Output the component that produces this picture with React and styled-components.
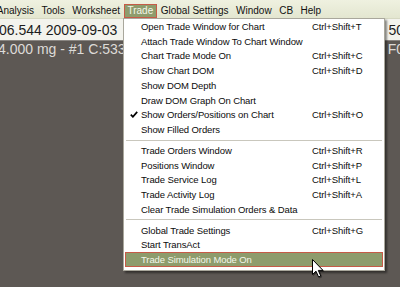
import React from 'react';
import styled, { createGlobalStyle } from 'styled-components';

const GlobalStyle = createGlobalStyle`
  html, body {
    margin: 0;
    padding: 0;
    background: #5d5854;
  }
  body {
    font-family: "Liberation Sans", Arial, sans-serif;
  }
`;

const Screen = styled.div`
  position: relative;
  width: 400px;
  height: 287px;
  overflow: hidden;
  background: #5d5854;
`;

const MenuBar = styled.div`
  display: flex;
  align-items: flex-start;
  height: 19px;
  margin-left: -7px;
  background: linear-gradient(#eff1e0, #e3e6d0);
  border-bottom: 1px solid #d6d8c2;
  box-sizing: border-box;
`;

const MenuTitle = styled.div`
  margin-top: 4px;
  height: 14px;
  line-height: 12px;
  padding: 0 2.75px;
  border: 1px solid ${p => (p.$open ? '#c65b47' : 'transparent')};
  background: ${p => (p.$open ? '#8e9c6c' : 'transparent')};
  color: ${p => (p.$open ? '#f4f6ea' : '#111')};
  font-size: 10px;
  white-space: nowrap;
  box-sizing: border-box;
`;

const QuoteRow = styled.div`
  display: flex;
  align-items: center;
  height: 21px;
  background: #f3f3ed;
  color: #1c1c1c;
  font-size: 14px;
  white-space: nowrap;
  overflow: hidden;
`;

const Lead = styled.span`
  margin-left: ${p => p.$shift}px;
`;

const Tail = styled.span`
  margin-left: auto;
  margin-right: -4px;
`;

const InfoRow = styled(QuoteRow)`
  height: 16px;
  background: #5d5854;
  color: #dddbd8;
  border-top: 1px solid #8a8682;
`;

const Dropdown = styled.div`
  position: absolute;
  left: 123px;
  top: 18px;
  width: 262px;
  box-sizing: border-box;
  padding: 0 1px 3px;
  background: #fff;
  border: 1px solid #a9a79c;
  box-shadow: 2px 2px 2px rgba(0, 0, 0, 0.45);
`;

const Item = styled.div`
  display: grid;
  grid-template-columns: 15px 171px 1fr;
  align-items: center;
  height: 14.75px;
  box-sizing: border-box;
  border: 1px solid ${p => (p.$hover ? '#c65b47' : 'transparent')};
  background: ${p => (p.$hover ? '#8e9c6c' : 'transparent')};
  color: ${p => (p.$hover ? '#f4f6ea' : '#0c0c0c')};
  font-size: 9.5px;
  letter-spacing: -0.1px;
  white-space: nowrap;
`;

const Check = styled.span`
  display: flex;
  justify-content: center;
  align-items: center;
`;

const Separator = styled.div`
  height: 6px;
  margin: 0 1px;
  display: flex;
  align-items: center;
  &::after {
    content: '';
    flex: 1;
    border-top: 1px solid #c9c7bd;
  }
`;

const Pointer = styled.svg`
  position: absolute;
  left: 312px;
  top: 259px;
  filter: drop-shadow(1px 1px 0.5px rgba(0, 0, 0, 0.35));
`;

const titles = ['Analysis', 'Tools', 'Worksheet', 'Trade', 'Global Settings', 'Window', 'CB', 'Help'];

const groups = [
  [
    ['Open Trade Window for Chart', 'Ctrl+Shift+T'],
    ['Attach Trade Window To Chart Window', ''],
    ['Chart Trade Mode On', 'Ctrl+Shift+C'],
    ['Show Chart DOM', 'Ctrl+Shift+D'],
    ['Show DOM Depth', ''],
    ['Draw DOM Graph On Chart', ''],
    ['Show Orders/Positions on Chart', 'Ctrl+Shift+O', true],
    ['Show Filled Orders', ''],
  ],
  [
    ['Trade Orders Window', 'Ctrl+Shift+R'],
    ['Positions Window', 'Ctrl+Shift+P'],
    ['Trade Service Log', 'Ctrl+Shift+L'],
    ['Trade Activity Log', 'Ctrl+Shift+A'],
    ['Clear Trade Simulation Orders & Data', ''],
  ],
  [
    ['Global Trade Settings', 'Ctrl+Shift+G'],
    ['Start TransAct', ''],
    ['Trade Simulation Mode On', '', false, true],
  ],
];

const App = () => (
  <Screen>
    <GlobalStyle />
    <MenuBar>
      {titles.map(t => (
        <MenuTitle key={t} $open={t === 'Trade'}>{t}</MenuTitle>
      ))}
    </MenuBar>
    <QuoteRow>
      <Lead $shift={-1}>06.544 2009-09-03</Lead>
      <Tail>50</Tail>
    </QuoteRow>
    <InfoRow>
      <Lead $shift={-2}>4.000 mg - #1  C:533</Lead>
      <Tail>F0</Tail>
    </InfoRow>

    <Dropdown>
      {groups.map((group, gi) => (
        <React.Fragment key={gi}>
          {gi > 0 && <Separator />}
          {group.map(([label, keys, checked, hover]) => (
            <Item key={label} $hover={hover}>
              <Check>
                {checked && (
                  <svg width="8" height="7" viewBox="0 0 8 7">
                    <path d="M0.8 3.6 L2.9 5.8 L7.2 0.9" fill="none" stroke="#000" strokeWidth="1.7" />
                  </svg>
                )}
              </Check>
              <span>{label}</span>
              <span>{keys}</span>
            </Item>
          ))}
        </React.Fragment>
      ))}
    </Dropdown>

    <Pointer width="12" height="19" viewBox="0 0 12 19">
      <path d="M0.5 0.5 L0.5 15.5 L4 12.2 L6.6 18 L8.8 17 L6.3 11.4 L11 11.4 Z" fill="#fff" stroke="#000" strokeWidth="1" strokeLinejoin="round" />
    </Pointer>
  </Screen>
);

export default App;
